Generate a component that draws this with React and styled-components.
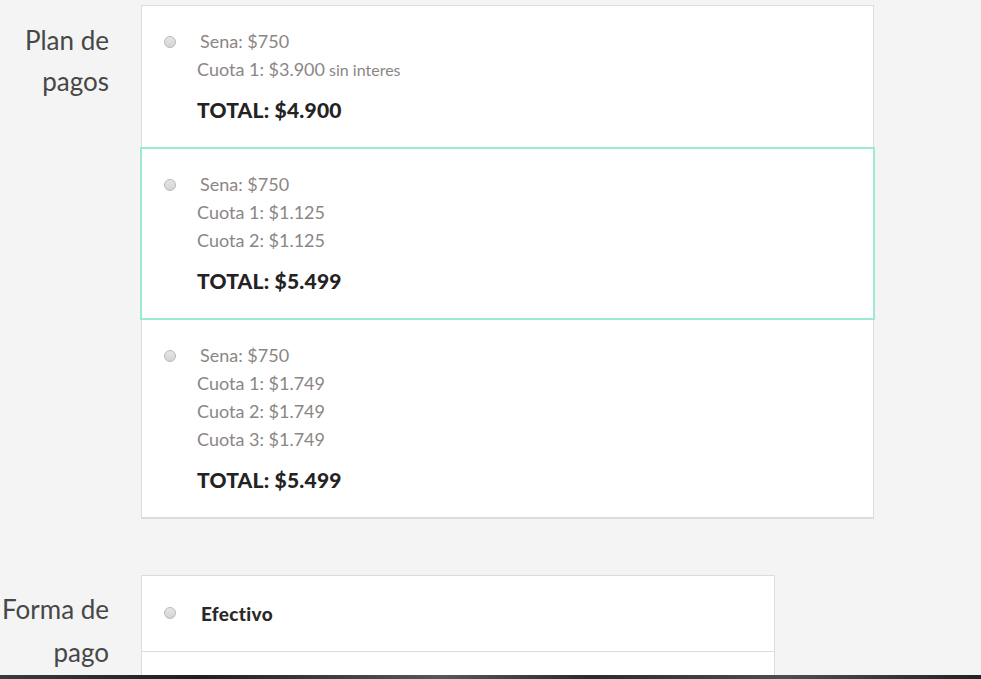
import React from 'react'
import styled, { createGlobalStyle } from 'styled-components'

const GlobalStyle = createGlobalStyle`
  html, body {
    margin: 0;
    padding: 0;
    background: #f4f4f4;
    font-family: Lato, "Open Sans", sans-serif;
  }
`

const Page = styled.div`
  height: 679px;
  overflow: hidden;
  display: flex;
  flex-direction: column;
  background: #f4f4f4;
`

const Content = styled.div`
  flex: 1;
  padding-top: 5px;
  display: flex;
  flex-direction: column;
  gap: 57px;
  overflow: hidden;
`

const Section = styled.div`
  display: grid;
  grid-template-columns: 109px ${p => p.$cardWidth}px;
  column-gap: 32px;
  align-items: start;
`

const Label = styled.div`
  text-align: right;
  font-size: 26px;
  line-height: ${p => p.$lineHeight || 41}px;
  color: #474747;
  padding-top: ${p => p.$top || 15}px;
`

const Card = styled.div`
  background: #fff;
  border: 1px solid #dcdcdc;
  box-shadow: 0 1px 0 #dcdcdc;
`

const Option = styled.div`
  display: flex;
  align-items: flex-start;
  padding: 21px 0 23px 22px;
  ${p => p.$selected && `
    margin: 0 -2px;
    padding-left: 22px;
    border: 2px solid #9de9d5;
  `}
`

const Radio = styled.span`
  flex: none;
  width: 10px;
  height: 10px;
  margin-top: ${p => (p.$centered ? -2 : 9)}px;
  border-radius: 50%;
  border: 1px solid #b9b9b9;
  background: linear-gradient(#e6e6e6, #d4d4d4);
`

const Lines = styled.div`
  margin-left: 21px;
  display: flex;
  flex-direction: column;
`

const Line = styled.div`
  font-size: 18px;
  line-height: 28px;
  height: 28px;
  color: #8b8685;
  padding-left: ${p => (p.$indent ? 3 : 0)}px;
`

const Small = styled.span`
  font-size: 16px;
  line-height: 1;
`

const Total = styled.div`
  margin-top: 13px;
  font-size: 21px;
  line-height: 28px;
  font-weight: 900;
  color: #242222;
  letter-spacing: 0.2px;
`

const MethodOption = styled.div`
  display: flex;
  align-items: center;
  height: 75px;
  padding-left: 22px;
  border-bottom: 1px solid #dcdcdc;
`

const MethodName = styled.div`
  margin-left: 25px;
  font-size: 19px;
  font-weight: 900;
  color: #2a2828;
  letter-spacing: 0.3px;
`

const MethodRest = styled.div`
  height: 40px;
`

const Footer = styled.div`
  flex: none;
  height: 4px;
  background: linear-gradient(90deg, #3a3a3c, #1d1e20 20%, #55575a 45%, #2a2b2e 60%, #4b4d50 80%, #222 100%);
`

const plans = [
  { cuotas: ['Cuota 1: $3.900'], extra: true, total: '$4.900' },
  { cuotas: ['Cuota 1: $1.125', 'Cuota 2: $1.125'], total: '$5.499', selected: true },
  { cuotas: ['Cuota 1: $1.749', 'Cuota 2: $1.749', 'Cuota 3: $1.749'], total: '$5.499' },
]

export default function App() {
  return (
    <Page>
      <GlobalStyle />
      <Content>
        <Section $cardWidth={733}>
          <Label>Plan de<br />pagos</Label>
          <Card>
            {plans.map((plan, i) => (
              <Option key={i} $selected={plan.selected}>
                <Radio />
                <Lines>
                  <Line $indent>Sena: $750</Line>
                  {plan.cuotas.map(c => (
                    <Line key={c}>
                      {c}
                      {plan.extra && <Small> sin interes</Small>}
                    </Line>
                  ))}
                  <Total>TOTAL: {plan.total}</Total>
                </Lines>
              </Option>
            ))}
          </Card>
        </Section>
        <Section $cardWidth={634}>
          <Label $top={13} $lineHeight={43}>Forma de<br />pago</Label>
          <Card>
            <MethodOption>
              <Radio $centered />
              <MethodName>Efectivo</MethodName>
            </MethodOption>
            <MethodRest />
          </Card>
        </Section>
      </Content>
      <Footer />
    </Page>
  )
}
